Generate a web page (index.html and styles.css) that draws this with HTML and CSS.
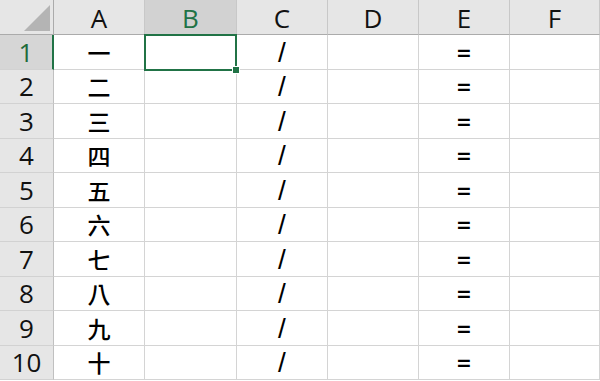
FILE: index.html
```html
<!DOCTYPE html>
<html>
<head>
<meta charset="utf-8">
<link rel="stylesheet" href="styles.css">
</head>
<body>
<div class="sheet">
  <div class="corner"><span class="tri"></span></div>
  <div class="ch">A</div><div class="ch ch-sel">B</div><div class="ch">C</div><div class="ch">D</div><div class="ch">E</div><div class="ch">F</div>

  <div class="rh rh-sel">1</div><div class="c">一</div><div class="c sel"></div><div class="c sym">/</div><div class="c"></div><div class="c eq">=</div><div class="c"></div>
  <div class="rh">2</div><div class="c">二</div><div class="c"></div><div class="c sym">/</div><div class="c"></div><div class="c eq">=</div><div class="c"></div>
  <div class="rh">3</div><div class="c">三</div><div class="c"></div><div class="c sym">/</div><div class="c"></div><div class="c eq">=</div><div class="c"></div>
  <div class="rh">4</div><div class="c">四</div><div class="c"></div><div class="c sym">/</div><div class="c"></div><div class="c eq">=</div><div class="c"></div>
  <div class="rh">5</div><div class="c">五</div><div class="c"></div><div class="c sym">/</div><div class="c"></div><div class="c eq">=</div><div class="c"></div>
  <div class="rh">6</div><div class="c">六</div><div class="c"></div><div class="c sym">/</div><div class="c"></div><div class="c eq">=</div><div class="c"></div>
  <div class="rh">7</div><div class="c">七</div><div class="c"></div><div class="c sym">/</div><div class="c"></div><div class="c eq">=</div><div class="c"></div>
  <div class="rh">8</div><div class="c">八</div><div class="c"></div><div class="c sym">/</div><div class="c"></div><div class="c eq">=</div><div class="c"></div>
  <div class="rh">9</div><div class="c">九</div><div class="c"></div><div class="c sym">/</div><div class="c"></div><div class="c eq">=</div><div class="c"></div>
  <div class="rh">10</div><div class="c">十</div><div class="c"></div><div class="c sym">/</div><div class="c"></div><div class="c eq">=</div><div class="c"></div>
</div>
</body>
</html>
```

FILE: styles.css
```css
html, body {
  margin: 0;
  padding: 0;
  background: #ffffff;
  overflow: hidden;
}

.sheet {
  display: grid;
  grid-template-columns: 54px 91px 92px 91px 91px 91px 1fr;
  grid-template-rows: 35px repeat(10, 34.5px);
  width: 600px;
  height: 381px;
}

.sheet > div {
  box-sizing: border-box;
  display: flex;
  align-items: center;
  justify-content: center;
}

.corner {
  background: #e6e6e6;
  border-right: 1px solid #ababab;
  border-bottom: 1px solid #ababab;
  position: relative;
}

.tri {
  position: absolute;
  right: 3px;
  bottom: 3px;
  width: 0;
  height: 0;
  border-left: 26px solid transparent;
  border-bottom: 26px solid #b4b4b4;
}

.ch {
  background: #e6e6e6;
  border-right: 1px solid #c8c8c8;
  border-bottom: 1px solid #ababab;
  font-family: "Open Sans", "Liberation Sans", sans-serif;
  font-size: 26px;
  color: #111111;
  padding-top: 1px;
}

.ch-sel {
  background: #d2d2d2;
  color: #217346;
}

.rh {
  background: #e6e6e6;
  border-right: 1px solid #c0c0c0;
  border-bottom: 1px solid #d2d2d2;
  font-family: "Open Sans", "Liberation Sans", sans-serif;
  font-size: 26px;
  color: #111111;
}

.rh-sel {
  background: #d6d6d6;
  color: #1e6b3a;
  border-right: 2px solid #217346;
}

.c {
  border-right: 1px solid #d4d4d4;
  border-bottom: 1px solid #d4d4d4;
  font-family: "Noto Sans CJK TC", "Noto Sans CJK SC", sans-serif;
  font-size: 23px;
  font-weight: 500;
  color: #000000;
}

.sym {
  font-family: "Liberation Sans", Arial, sans-serif;
  font-size: 28px;
  font-weight: 400;
  padding-top: 2px;
}

.eq {
  font-family: "Open Sans", "Noto Sans CJK TC", sans-serif;
  font-size: 25px;
  font-weight: 600;
}

.sel {
  position: relative;
}

.sel::after {
  content: "";
  position: absolute;
  top: -1px;
  left: -1px;
  right: -1px;
  bottom: -2px;
  border: 2px solid #217346;
}

.sel::before {
  content: "";
  position: absolute;
  right: -4px;
  bottom: -5px;
  width: 6px;
  height: 6px;
  background: #217346;
  border: 1px solid #ffffff;
  z-index: 2;
}
```
